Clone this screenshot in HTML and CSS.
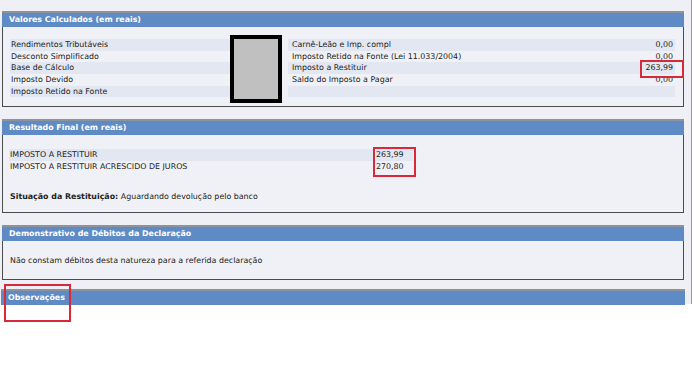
FILE: index.html
```html
<!DOCTYPE html>
<html lang="pt-BR">
<head>
    <meta charset="UTF-8">
    <title>Extrato da Declaração</title>
    <link rel="stylesheet" href="styles.css">
</head>
<body>
    <div class="page">
        <div class="panel">
            <div class="panel-title">Valores Calculados (em reais)</div>
            <div class="calc-body">
                <div class="col-left">
                    <div class="row band">Rendimentos Tributáveis</div>
                    <div class="row">Desconto Simplificado</div>
                    <div class="row band">Base de Cálculo</div>
                    <div class="row">Imposto Devido</div>
                    <div class="row band">Imposto Retido na Fonte</div>
                </div>
                <div class="photo"></div>
                <div class="col-right">
                    <div class="row band"><span>Carnê-Leão e Imp. compl</span><span class="val">0,00</span></div>
                    <div class="row"><span>Imposto Retido na Fonte (Lei 11.033/2004)</span><span class="val">0,00</span></div>
                    <div class="row band"><span>Imposto a Restituir</span><span class="val mark">263,99</span></div>
                    <div class="row"><span>Saldo do Imposto a Pagar</span><span class="val">0,00</span></div>
                    <div class="row band"><span></span><span class="val"></span></div>
                </div>
            </div>
        </div>

        <div class="panel">
            <div class="panel-title">Resultado Final (em reais)</div>
            <div class="result-body">
                <div class="result-table">
                    <div class="result-labels">
                        <div class="row band">IMPOSTO A RESTITUIR</div>
                        <div class="row">IMPOSTO A RESTITUIR ACRESCIDO DE JUROS</div>
                    </div>
                    <div class="result-values mark">
                        <div class="row band">263,99</div>
                        <div class="row">270,80</div>
                    </div>
                </div>
                <p class="status"><b>Situação da Restituição:</b> Aguardando devolução pelo banco</p>
            </div>
        </div>

        <div class="panel panel-debts">
            <div class="panel-title">Demonstrativo de Débitos da Declaração</div>
            <div class="debts-body">Não constam débitos desta natureza para a referida declaração</div>
        </div>

        <div class="panel panel-cut">
            <div class="panel-title mark obs">Observações</div>
        </div>
    </div>
</body>
</html>
```

FILE: styles.css
```css
html, body {
    min-height: 367px;
}
body {
    margin: 0;
    background-color: #ffffff;
    font-family: "DejaVu Sans", Verdana, sans-serif;
    font-size: 7.9px;
    color: #222222;
}
.page {
    width: 692px;
    height: 304px;
    padding-top: 11px;
    box-sizing: border-box;
    background-color: #eff0f5;
    border-right: 1px solid #9a9a9a;
}
.panel {
    width: 682px;
    margin: 0 0 12px 2px;
    background-color: #f0f1f6;
    border: 1px solid #4c4c4c;
    border-top: none;
    box-sizing: border-box;
}
.panel-title {
    height: 16px;
    line-height: 14px;
    padding-left: 7px;
    background-color: #5e8bc6;
    border-top: 2px solid #8d929b;
    margin: 0 -1px;
    color: #ffffff;
    font-weight: bold;
    box-sizing: border-box;
}
.row {
    height: 11.7px;
    line-height: 11.7px;
    white-space: nowrap;
}
.band {
    background-color: #e2e7f1;
}
.mark {
    position: relative;
}
.mark::after {
    content: "";
    position: absolute;
    border: 2px solid #d8283a;
    z-index: 2;
}

/* valores calculados */
.calc-body {
    display: flex;
    padding: 8px 8px 3px 7px;
}
.col-left {
    width: 220px;
    margin-top: 4px;
}
.col-left .row {
    padding-left: 1px;
}
.photo {
    width: 52px;
    height: 68px;
    box-sizing: border-box;
    border: 4px solid #000000;
    background-color: #c0c0c0;
}
.col-right {
    flex: 1;
    margin-top: 4px;
    margin-left: 6px;
}
.col-right .row {
    display: flex;
    justify-content: space-between;
    padding: 0 2px 0 4px;
}
.val.mark::after {
    top: -2px;
    bottom: -4px;
    left: -5px;
    right: -11px;
}

/* resultado final */
.result-body {
    padding: 14px 0 9px 6px;
}
.result-table {
    display: flex;
    width: 404px;
}
.result-labels {
    width: 364px;
}
.result-labels .row {
    padding-left: 1px;
}
.result-values {
    flex: 1;
    padding-left: 3px;
}
.result-values.mark::after {
    top: -2px;
    bottom: -5px;
    left: 0;
    right: -3px;
}
.status {
    margin: 19px 0 0 1px;
    line-height: 12px;
}

/* débitos */
.panel-debts {
    margin-bottom: 9px;
}
.debts-body {
    padding: 14px 0 12px 7px;
    line-height: 12px;
}

.panel-cut {
    border: none;
}
.obs.mark::after {
    top: -7px;
    left: 3px;
    width: 63px;
    height: 34px;
}
```
